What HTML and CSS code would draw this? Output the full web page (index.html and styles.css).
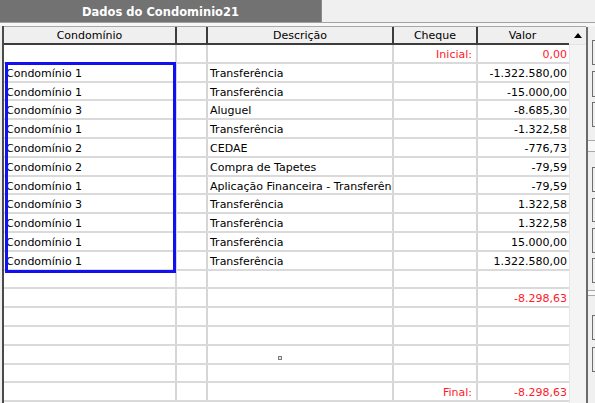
FILE: index.html
```html
<!DOCTYPE html>
<html lang="pt">
<head>
<meta charset="utf-8">
<title>Dados do Condominio21</title>
<link rel="stylesheet" href="styles.css">
</head>
<body>
<div class="topbar"><div class="tab">Dados do Condominio21</div></div>
<div class="spacer"></div>
<div class="main">
  <div class="grid">
    <div class="table">
      <div class="row head">
        <div class="hc">Condomínio</div><div class="hc"></div><div class="hc">Descrição</div><div class="hc">Cheque</div><div class="hc last">Valor</div>
      </div>
      <div class="row"><div class="c"></div><div class="c"></div><div class="c"></div><div class="c num red">Inicial:</div><div class="c val red">0,00</div></div>
      <div class="row"><div class="c">Condomínio 1</div><div class="c"></div><div class="c">Transferência</div><div class="c"></div><div class="c val">-1.322.580,00</div></div>
      <div class="row"><div class="c">Condomínio 1</div><div class="c"></div><div class="c">Transferência</div><div class="c"></div><div class="c val">-15.000,00</div></div>
      <div class="row"><div class="c">Condomínio 3</div><div class="c"></div><div class="c">Aluguel</div><div class="c"></div><div class="c val">-8.685,30</div></div>
      <div class="row"><div class="c">Condomínio 1</div><div class="c"></div><div class="c">Transferência</div><div class="c"></div><div class="c val">-1.322,58</div></div>
      <div class="row"><div class="c">Condomínio 2</div><div class="c"></div><div class="c">CEDAE</div><div class="c"></div><div class="c val">-776,73</div></div>
      <div class="row"><div class="c">Condomínio 2</div><div class="c"></div><div class="c">Compra de Tapetes</div><div class="c"></div><div class="c val">-79,59</div></div>
      <div class="row"><div class="c">Condomínio 1</div><div class="c"></div><div class="c">Aplicação Financeira - Transferência</div><div class="c"></div><div class="c val">-79,59</div></div>
      <div class="row"><div class="c">Condomínio 3</div><div class="c"></div><div class="c">Transferência</div><div class="c"></div><div class="c val">1.322,58</div></div>
      <div class="row"><div class="c">Condomínio 1</div><div class="c"></div><div class="c">Transferência</div><div class="c"></div><div class="c val">1.322,58</div></div>
      <div class="row"><div class="c">Condomínio 1</div><div class="c"></div><div class="c">Transferência</div><div class="c"></div><div class="c val">15.000,00</div></div>
      <div class="row"><div class="c">Condomínio 1</div><div class="c"></div><div class="c">Transferência</div><div class="c"></div><div class="c val">1.322.580,00</div></div>
      <div class="row"><div class="c"></div><div class="c"></div><div class="c"></div><div class="c"></div><div class="c val"></div></div>
      <div class="row"><div class="c"></div><div class="c"></div><div class="c"></div><div class="c"></div><div class="c val red">-8.298,63</div></div>
      <div class="row"><div class="c"></div><div class="c"></div><div class="c"></div><div class="c"></div><div class="c val"></div></div>
      <div class="row"><div class="c"></div><div class="c"></div><div class="c"></div><div class="c"></div><div class="c val"></div></div>
      <div class="row"><div class="c"></div><div class="c"></div><div class="c"><span class="marker"></span></div><div class="c"></div><div class="c val"></div></div>
      <div class="row"><div class="c"></div><div class="c"></div><div class="c"></div><div class="c"></div><div class="c val"></div></div>
      <div class="row"><div class="c"></div><div class="c"></div><div class="c"></div><div class="c num red">Final:</div><div class="c val red">-8.298,63</div></div>
    </div>
    <div class="selection"></div>
  </div>
  <div class="vscroll">
    <div class="upbtn"><svg width="8" height="5" viewBox="0 0 8 5"><path d="M0 5 L4 0 L8 5 Z" fill="#000"/></svg></div>
    <div class="track"></div>
  </div>
  <div class="divider"></div>
  <div class="side">
    <div class="btn b1"></div>
    <div class="btn b2"></div>
    <div class="btn b3"></div>
    <div class="sep s1"></div>
    <div class="btn b4"></div>
    <div class="btn b5"></div>
    <div class="btn b6"></div>
    <div class="btn b7"></div>
    <div class="sep s2"></div>
    <div class="btn b8"></div>
    <div class="btn b9"></div>
  </div>
</div>
</body>
</html>
```
FILE: styles.css
```css
html, body {
  margin: 0;
  padding: 0;
  background: #f0f0f0;
  overflow: hidden;
}
body {
  width: 595px;
  height: 403px;
  font-family: "DejaVu Sans", "Liberation Sans", sans-serif;
  font-size: 11px;
  color: #000;
}
.topbar {
  height: 22px;
  border-bottom: 1px solid #a2a2a2;
  background: #f0f0f0;
  display: flex;
}
.tab {
  width: 322px;
  background: #727272;
  border-right: 1px solid #8c8c8c;
  color: #fff;
  font-weight: bold;
  font-size: 11.5px;
  display: flex;
  align-items: center;
  justify-content: center;
  padding-top: 1px;
  box-sizing: border-box;
}
.spacer {
  height: 3px;
  background: #f7f7f7;
}
.main {
  display: flex;
  height: 377px;
}
.grid {
  position: relative;
  width: 569px;
  padding-left: 2px;
  box-sizing: border-box;
  flex: none;
}
.table {
  border-left: 2px solid #4a4a4a;
  background: #fff;
  height: 100%;
}
.row {
  display: grid;
  grid-template-columns: 173px 31px 186px 84px 89px;
  height: 18.8px;
  box-sizing: border-box;
  border-bottom: 2px solid #dadada;
}
.row.head {
  height: 19px;
  border-top: 1px solid #a8a8a8;
  border-bottom: 2px solid #3c3c3c;
  background: #efefef;
}
.hc {
  border-right: 2px solid #3c3c3c;
  text-align: center;
  line-height: 15px;
  padding-top: 1px;
  white-space: nowrap;
  overflow: hidden;
}
.hc.last {
  border-right: none;
}
.c {
  border-right: 2px solid #d6d6d6;
  line-height: 15px;
  padding-top: 2px;
  padding-left: 2px;
  white-space: nowrap;
  overflow: hidden;
}
.c.num {
  text-align: right;
  padding-right: 4px;
}
.c.val {
  border-right: none;
  text-align: right;
  padding-right: 0;
}
.red {
  color: #ff1a2a;
}
.marker {
  display: inline-block;
  width: 2px;
  height: 2px;
  border: 1px solid #7a7a7a;
  background: #e8e8e8;
  margin-left: 68px;
  vertical-align: -1px;
}
.selection {
  position: absolute;
  left: 5px;
  top: 36px;
  width: 171px;
  height: 211px;
  box-sizing: border-box;
  border: 3px solid #1010f0;
}
.vscroll {
  width: 17px;
  flex: none;
  display: flex;
  flex-direction: column;
  background: #f0f0f0;
  border-top: 1px solid #a8a8a8;
  box-sizing: border-box;
}
.upbtn {
  height: 17px;
  display: flex;
  align-items: center;
  justify-content: center;
  background: #f0f0f0;
  border-bottom: 1px solid #e4e4e4;
}
.track {
  flex: 1;
  background: #f4f4f4;
  border-left: 1px solid #e6e6e6;
}
.divider {
  width: 2px;
  flex: none;
  margin-top: 1px;
  background: #6c6c6c;
}
.side {
  flex: 1;
  display: flex;
  flex-direction: column;
  background: #f0f0f0;
}
.btn {
  margin-left: 4px;
  height: 25px;
  box-sizing: border-box;
  border: 1px solid #6e6e6e;
  border-right: none;
  flex: none;
}
.sep {
  flex: none;
  box-sizing: border-box;
  border-top: 1px solid #a8a8a8;
  border-bottom: 1px solid #a8a8a8;
  background: #f8f8f8;
}
.b1 { margin-top: 14px; }
.b2 { margin-top: 6px; height: 26px; }
.b3 { margin-top: 5px; }
.s1 { margin-top: 13px; height: 12px; }
.b4 { margin-top: 15px; }
.b5 { margin-top: 6px; height: 24px; }
.b6 { margin-top: 6px; }
.b7 { margin-top: 5px; }
.s2 { margin-top: 7px; height: 6px; }
.b8 { margin-top: 19px; }
.b9 { margin-top: 7px; }
```
